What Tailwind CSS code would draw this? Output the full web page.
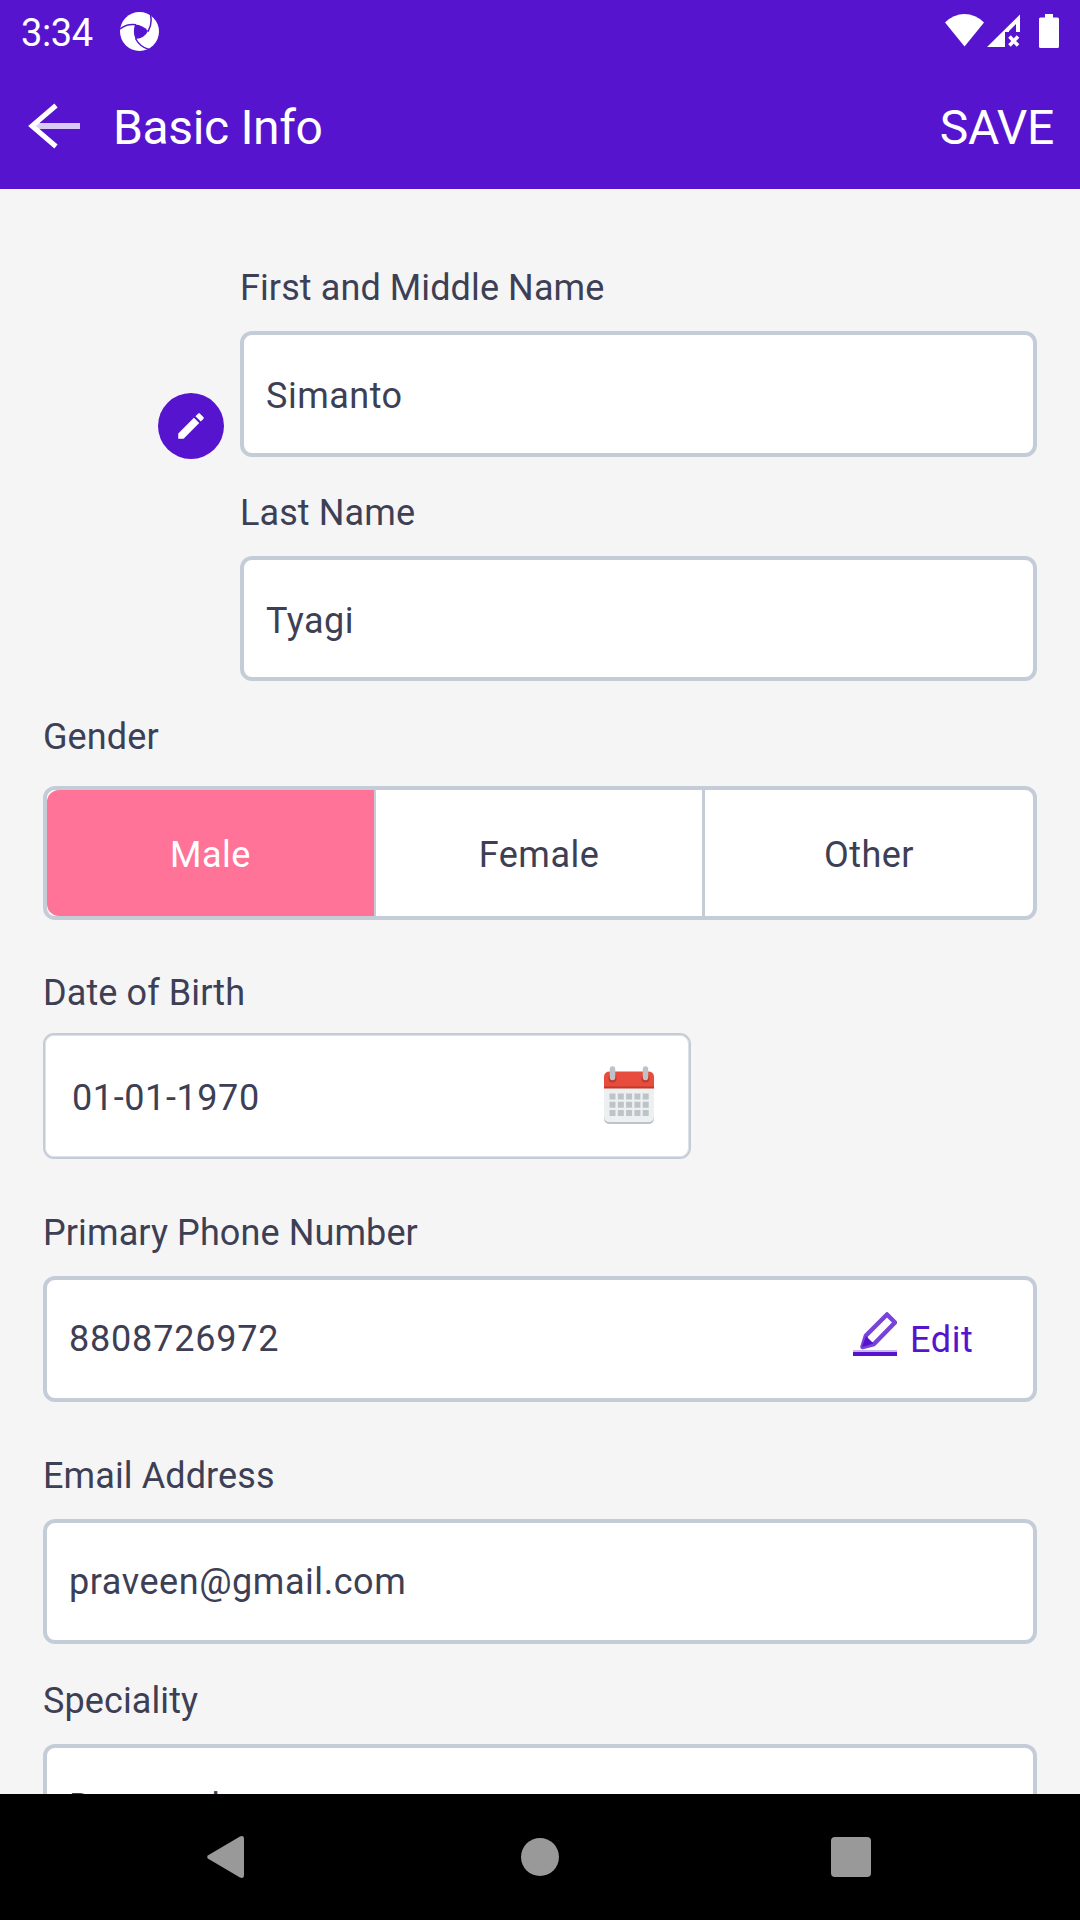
<!DOCTYPE html>
<html lang="en">
<head>
<meta charset="utf-8">
<title>Basic Info</title>
<script src="https://cdn.jsdelivr.net/npm/@tailwindcss/browser@4"></script>
</head>
<body class="w-[1080px] h-[1920px] overflow-hidden flex flex-col bg-[#f5f5f5] font-[Roboto,sans-serif] text-[36px] leading-[42px] tracking-[0.1px] text-[#3d4055]">
  <header class="h-[189px] shrink-0 bg-[#5614cf] text-white tracking-[-0.35px]">
    <!-- status bar -->
    <div class="h-[63px] flex items-start pl-[21px] pr-[21px]">
      <span class="text-[38px] leading-[67px] w-[99px]">3:34</span>
      <svg class="mt-3 w-[39px] h-[39px]" viewBox="0 0 39 39">
        <circle cx="19.5" cy="19.5" r="19.5" fill="#fff"/>
        <path d="M15 12.500Q23 13 28 19Q25 26 15.500 27Q12.500 20 15 12.500Z" fill="#5614cf"/>
        <path d="M0 17Q7 11.500 16 12.800M28 19.500Q32.500 12 30.500 3M15.500 26.500Q20 35 29 37.500" fill="none" stroke="#5614cf" stroke-width="1.500"/>
      </svg>
      <svg class="ml-auto mt-3.5 w-[39px] h-[33px]" viewBox="0 0 39 33"><path d="M0 8.500Q8.500 0 19.500 0T39 8.500L19.500 32.500Z" fill="#fff"/></svg>
      <svg class="ml-[3px] mt-3.5 w-[34px] h-[34px]" viewBox="0 0 34 34">
        <path d="M0 33L33 .5V18H29V10L22 17V18H18V33Z" fill="#fff"/>
        <path d="M22.500 22.500L31 31.500M31 22.500L22.500 31.500" stroke="#fff" stroke-width="3.600"/>
      </svg>
      <svg class="ml-[18px] mt-3.5 w-5 h-[34px]" viewBox="0 0 20 34"><path d="M6 0H14V3.500H18.500Q20 3.500 20 5V32.500Q20 34 18.500 34H1.500Q0 34 0 32.500V5Q0 3.500 1.500 3.500H6Z" fill="#fff"/></svg>
    </div>
    <!-- title bar -->
    <div class="h-[126px] flex items-center pl-7 pr-[26px] text-[48px] leading-[56px]">
      <svg class="w-[54px] h-[46px]" viewBox="0 0 54 46" fill="none" stroke="#fff">
        <path d="M6 23H52" stroke-width="6" stroke-opacity=".78"/>
        <path d="M28 2.500L4 23L28 43.500" stroke-width="5"/>
      </svg>
      <h1 class="ml-[31px] mt-[3px]">Basic Info</h1>
      <span class="ml-auto mt-[3px]">SAVE</span>
    </div>
  </header>

  <main class="flex-1 min-h-0 overflow-hidden px-[43px] pt-[78px] flex flex-col">
    <div class="flex shrink-0">
      <div class="w-[197px] pl-[115px] pt-[126px]">
        <div class="w-[66px] h-[66px] rounded-full bg-[#5614cf] flex items-center justify-center">
          <svg class="w-[34px] h-[34px]" viewBox="0 0 24 24" fill="#fff"><path d="M3 17.250V21h3.750L17.810 9.940l-3.750-3.750L3 17.250zM20.710 7.040c.39-.39.39-1.020 0-1.410l-2.340-2.340c-.39-.39-1.020-.39-1.410 0l-1.830 1.830 3.750 3.750 1.830-1.830z"/></svg>
        </div>
      </div>
      <div class="flex-1">
        <div>First and Middle Name</div>
        <div class="mt-[22px] h-[126px] rounded-xl border-4 border-[#c4cdd7] bg-white flex items-center pl-[22px] pt-[3px] tracking-[0.5px]">Simanto</div>
        <div class="mt-[35px]">Last Name</div>
        <div class="mt-[22px] h-[125px] rounded-xl border-4 border-[#c4cdd7] bg-white flex items-center pl-[22px] pt-1 tracking-[0.5px]">Tyagi</div>
      </div>
    </div>

    <div class="mt-[35px] shrink-0">Gender</div>
    <div class="mt-7 h-[134px] shrink-0 rounded-xl border-4 border-[#c4cdd7] bg-white flex text-center leading-[130px] tracking-[0.5px]">
      <div class="w-[329px] rounded-l-xl border-r-2 border-[#c4cdd7] bg-[#ff7398] text-white">Male</div>
      <div class="w-[329px] border-r-3 border-[#c4cdd7]">Female</div>
      <div class="flex-1">Other</div>
    </div>

    <div class="mt-[52px] shrink-0">Date of Birth</div>
    <div class="mt-[19px] w-[648px] h-[126px] shrink-0 rounded-[11px] border-2 border-[#c4cdd7] bg-white inset-ring inset-ring-[#dde2e9] flex items-center pl-[27px] pr-[35px]">
      <span class="mt-[3px] tracking-[0.6px]">01-01-1970</span>
      <svg class="ml-auto -mt-0.5 w-[50px] h-[58px]" viewBox="0 0 50 58">
        <path d="M0 20H50V52Q50 58 44 58H6Q0 58 0 52Z" fill="#bdc3c7"/>
        <path d="M0 20H50V50Q50 56 44 56H6Q0 56 0 50Z" fill="#ecf0f1"/>
        <path d="M0 22V11Q0 5.500 6 5.500H44Q50 5.500 50 11V22Z" fill="#e84c3d"/>
        <path d="M0 20.500H50V22.500H0Z" fill="#c0392b"/>
        <circle cx="8.500" cy="12.500" r="4" fill="#c0392b"/><circle cx="41.500" cy="12.500" r="4" fill="#c0392b"/>
        <path d="M8.500 3V11.500M41.500 3V11.500" stroke="#bdc3c7" stroke-width="5.500" stroke-linecap="round"/>
        <path d="M5.500 30.500H45M5.500 38.800H45M5.500 47H45" stroke="#bdc3c7" stroke-width="6" stroke-dasharray="6 2.300"/>
      </svg>
    </div>

    <div class="mt-[53px] shrink-0">Primary Phone Number</div>
    <div class="mt-[22px] h-[126px] shrink-0 rounded-xl border-4 border-[#c4cdd7] bg-white flex items-center pl-[22px]">
      <span class="tracking-[0.8px]">8808726972</span>
      <div class="ml-auto w-[180px] flex items-center text-[#5614cf]">
        <svg class="-mt-2.5 w-11 h-11" viewBox="0 0 44 44" fill="none" stroke="#5614cf">
          <path d="M0 42H44" stroke-width="4"/><path d="M0 39H44" stroke-width="2" stroke-opacity=".3"/>
          <path d="M34 2.500L42 10.500L21 32L9.500 35L13 23.500Z" stroke-width="4.500" stroke-opacity=".8" stroke-linejoin="round"/>
          <path d="M13 24L20.500 31.500L9 35Z" fill="#5614cf" stroke="none"/>
        </svg>
        <span class="ml-[13px] mt-0.5 tracking-[0.6px]">Edit</span>
      </div>
    </div>

    <div class="mt-[53px] shrink-0">Email Address</div>
    <div class="mt-[22px] h-[125px] shrink-0 rounded-xl border-4 border-[#c4cdd7] bg-white flex items-center pl-[22px] tracking-[0.55px]">praveen@gmail.com</div>

    <div class="mt-9 shrink-0">Speciality</div>
    <div class="mt-[22px] h-[126px] shrink-0 rounded-xl border-4 border-[#c4cdd7] bg-white flex items-center pl-[22px] tracking-[0.6px]">Dermatology</div>
  </main>

  <!-- system navigation -->
  <nav class="h-[126px] shrink-0 bg-black flex items-center justify-between pl-[207px] pr-[209px]">
    <svg class="w-[37px] h-[42px]" viewBox="0 0 37 42"><path d="M1.200 19.200L33 .5Q37 -1 37 3V39Q37 43 33 41.500L1.200 22.800Q-.8 21 1.200 19.200Z" fill="#999"/></svg>
    <div class="ml-[5px] w-[38px] h-[38px] rounded-full bg-[#999]"></div>
    <div class="w-10 h-10 rounded bg-[#999]"></div>
  </nav>
</body>
</html>
